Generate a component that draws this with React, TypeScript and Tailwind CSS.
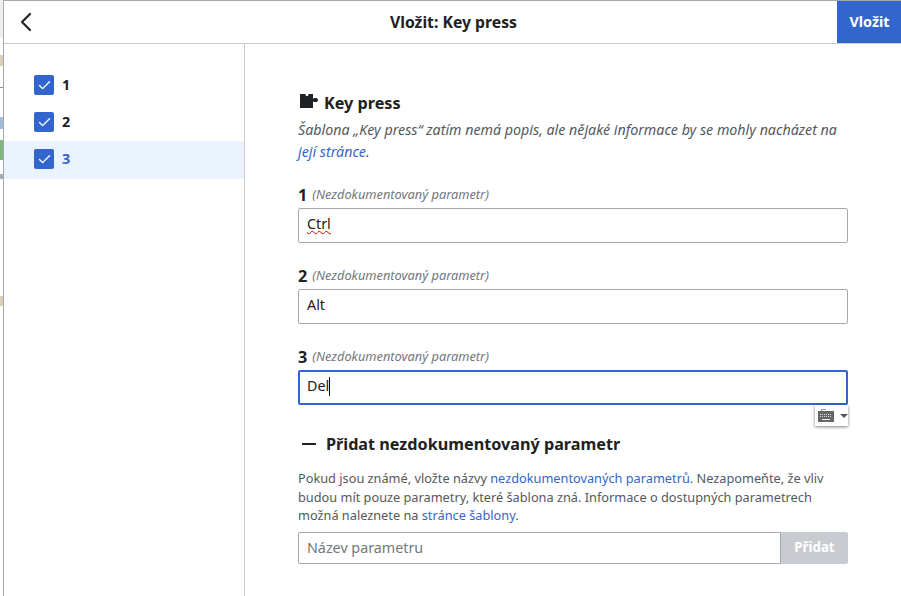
import { Check, ChevronLeft } from "lucide-react";

const params = [
  { name: "1", value: "Ctrl" },
  { name: "2", value: "Alt" },
  { name: "3", value: "Del" },
];

const PuzzleIcon = () => (
  <svg width="20" height="20" viewBox="0 0 20 20" className="text-[#202122]">
    <path
      fill="currentColor"
      d="M2 1h5.500c0 1.500.5 2.200 1.500 2.200s1.500-.7 1.500-2.200H15v4.500c1.500-1 5-1 5 1.500s-3.500 2.500-5 1.500V15H2z"
    />
  </svg>
);

const KeyboardIcon = () => (
  <svg width="18" height="13" viewBox="0 0 18 13">
    <path fill="#999" d="M3 0h5v1H4v1H3z" />
    <rect x="0" y="2" width="16" height="11" fill="#666" />
    <path stroke="#ddd" strokeWidth="1" strokeDasharray="1 1" d="M2 5.500h12M2 7.500h12" />
    <path stroke="#eee" strokeWidth="1" d="M4 10.500h8" />
  </svg>
);

const App = () => {
  return (
    <div className="flex h-[596px] w-[901px] overflow-hidden bg-white font-['Noto_Sans',sans-serif] text-[#202122]">
      {/* sliver of the page behind the dialog */}
      <div className="flex w-[3px] shrink-0 flex-col">
        <div className="h-[38px] bg-[#eeeeee]" />
        <div className="h-[17px]" />
        <div className="h-[11px] bg-[#dccfb8]" />
        <div className="h-[21px]" />
        <div className="h-px bg-[#a08c7c]" />
        <div className="h-[29px]" />
        <div className="h-[12px] bg-[#a3bbd6]" />
        <div className="h-[11px]" />
        <div className="h-[20px] bg-[#7fb57f]" />
        <div className="h-[14px]" />
        <div className="h-[5px] bg-[#a8acb2]" />
        <div className="h-[117px]" />
        <div className="h-[10px] bg-[#dccfb8]" />
      </div>
      <div className="flex min-w-0 flex-1 flex-col border-t border-l border-t-[#a2a9b1] border-l-[#a2a9b1]">
        <header className="flex h-[43px] shrink-0 items-center border-b border-[#c8ccd1]">
          <button className="flex h-full w-[44px] items-center justify-center">
            <ChevronLeft size={32} strokeWidth={1.6} className="text-[#202122]" />
          </button>
          <h1 className="flex-1 pt-px pl-[22px] text-center text-[15.750px] font-bold">Vložit: Key press</h1>
          <button className="h-full w-[64px] bg-[#3366cc] pl-px text-[14.300px] font-bold text-white">Vložit</button>
        </header>
        <div className="flex min-h-0 flex-1">
          <aside className="w-[241px] shrink-0 border-r border-[#c8ccd1] pt-[23px]">
            {params.map((p, i) => (
              <div
                key={p.name}
                className={`flex items-center gap-[8px] pl-[30px] text-[14.300px] font-bold ${
                  i === 2 ? "h-[38px] bg-[#eaf3ff] pb-[2px] text-[#3366cc]" : "h-[37px] pb-px"
                }`}
              >
                <span className="flex h-[20px] w-[20px] items-center justify-center rounded-[2px] bg-[#3366cc]">
                  <Check size={15} strokeWidth={2.2} className="text-white" />
                </span>
                {p.name}
              </div>
            ))}
          </aside>
          <main className="flex-1 pt-[47px] pl-[53px] pr-[53px]">
            <h2 className="flex h-[24px] items-center gap-[6px] text-[16.200px] font-bold">
              <PuzzleIcon />
              Key press
            </h2>
            <p className="mt-[4px] mb-[-1px] text-[14.240px] leading-[22px] text-[#54595d] italic">
              Šablona „Key press“ zatím nemá popis, ale nějaké informace by se mohly nacházet na{" "}
              <a className="text-[#3366cc]">její stránce</a>.
            </p>
            {params.map((p, i) => (
              <div key={p.name} className="mt-[19px]">
                <div className="flex h-[24px] items-center gap-[5px]">
                  <span className="mt-[5px] text-[16.200px] font-bold">{p.name}</span>
                  <span className="mt-[3px] text-[12.800px] text-[#72777d] italic">(Nezdokumentovaný parametr)</span>
                </div>
                <div
                  className={`mt-[3px] flex h-[35px] items-center rounded-[2px] pb-[3px] text-[14.300px] ${
                    i === 2 ? "border-2 border-[#3366cc] px-[7px]" : "border border-[#a2a9b1] px-[8px]"
                  }`}
                >
                  {i === 0 ? (
                    <span className="underline decoration-[#d00] decoration-wavy decoration-1">{p.value}</span>
                  ) : (
                    p.value
                  )}
                  {i === 2 && <span className="h-[19px] w-px bg-black" />}
                </div>
              </div>
            ))}
            <div className="flex justify-end">
              <div className="flex h-[21px] w-[33px] items-center gap-[4px] pl-[3px] shadow-[0_1px_3px_rgba(0,0,0,0.5)]">
                <KeyboardIcon />
                <span className="h-0 w-0 border-x-[4px] border-t-[4px] border-x-transparent border-t-[#555]" />
              </div>
            </div>
            <div className="mt-[6px] flex h-[24px] items-center text-[16.200px] font-bold">
              <span className="ml-[4px] h-[2px] w-[14px] bg-[#202122]" />
              <span className="ml-[10px]">Přidat nezdokumentovaný parametr</span>
            </div>
            <p className="mt-[13px] text-[12.750px] leading-[18.500px] text-[#54595d]">
              Pokud jsou známé, vložte názvy <a className="text-[#3366cc]">nezdokumentovaných parametrů</a>. Nezapomeňte,
              že vliv budou mít pouze parametry, které šablona zná. Informace o dostupných parametrech možná naleznete na{" "}
              <a className="text-[#3366cc]">stránce šablony</a>.
            </p>
            <div className="mt-[7px] flex h-[32px] text-[14.300px]">
              <div className="flex flex-1 items-center rounded-l-[2px] border border-[#a2a9b1] pl-[8px] text-[#72777d]">
                Název parametru
              </div>
              <div className="flex w-[67px] items-center justify-center rounded-r-[2px] bg-[#c8ccd1] text-[13.300px] font-bold text-white">
                Přidat
              </div>
            </div>
          </main>
        </div>
      </div>
    </div>
  );
};

export default App;
